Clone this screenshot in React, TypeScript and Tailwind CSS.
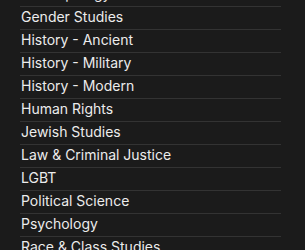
const subjects = [
  'Anthropology',
  'Gender Studies',
  'History - Ancient',
  'History - Military',
  'History - Modern',
  'Human Rights',
  'Jewish Studies',
  'Law & Criminal Justice',
  'LGBT',
  'Political Science',
  'Psychology',
  'Race & Class Studies',
];

export default function App() {
  return (
    <div className="h-[250px] w-[305px] overflow-hidden bg-[#1b1b1b] font-['Inter',sans-serif]">
      <ul className="-mt-[17px] ml-5 mr-6">
        {subjects.map(s => (
          <li
            key={s}
            className="h-[23px] border-t border-[#333333] pb-[2px] text-[14px] leading-[20px] text-[#ececec]"
          >
            <a href="#" className="block pl-px">{s}</a>
          </li>
        ))}
      </ul>
    </div>
  );
}
